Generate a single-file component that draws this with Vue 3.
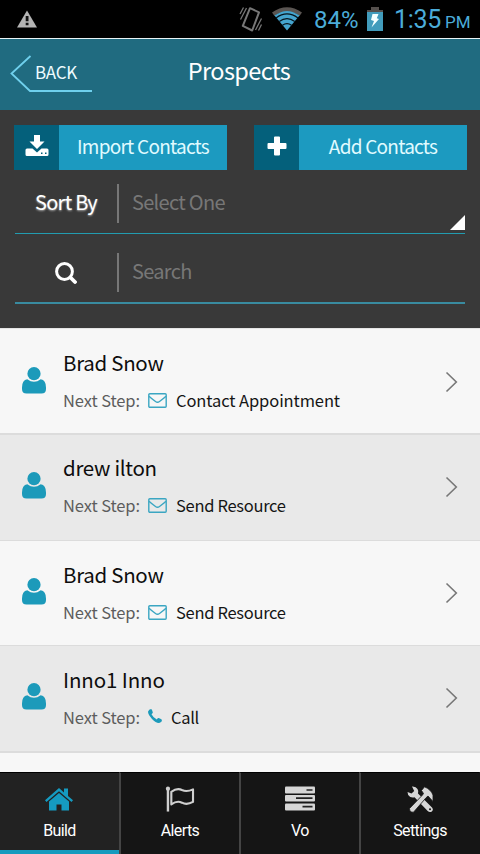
<template>
  <div class="screen">
    <div class="status-bar">
      <svg class="warning" width="20" height="18" viewBox="0 0 20 18">
        <path d="M10 0.5 L20 17.5 H0 Z" fill="#b4b4b4" />
        <path d="M8.7 6h2.8v5.3H8.7zM8.7 12.7h2.8v2.5H8.7z" fill="#111" />
      </svg>
      <div class="status-right">
        <svg class="vibrate" width="24" height="28" viewBox="0 0 24 28" fill="none" stroke="#777">
          <path d="M11 3.2 L20 7.300 L13.200 25.500 L3.800 20.800 Z" stroke-width="2" stroke-linejoin="round" />
          <path d="M1 9 L4.500 2.500 M1.500 14.500 L7.500 3 M16.500 25 L22.500 13.500 M19.500 25.500 L22.500 19.500" stroke-width="1.300" />
        </svg>
        <svg class="wifi" width="30" height="24" viewBox="0 0 30 24">
          <path d="M0 5.5 Q15 -5 30 5.5 L27.5 9 Q15 0 2.5 9 Z" fill="#5a5552" />
          <path d="M2.5 8.6 Q15 -.8 27.5 8.6 L15 23.5 Z" fill="#45a5cf" />
          <path d="M4 10.9 Q15 2.8 26 10.9 M7.2 14.5 Q15 8.8 22.8 14.5 M10.5 18.2 Q15 15 19.5 18.2" fill="none" stroke="#06141c" stroke-width="1.2" />
        </svg>
        <span class="percent">84%</span>
        <svg class="battery" width="16" height="24" viewBox="0 0 16 24">
          <path d="M4 0h8v3h4v5H0V3h4z" fill="#55504d" />
          <path d="M0 5h16v19H0z" fill="#429cbc" />
          <path d="M5.5 7h6L9.8 11.2 12 12 4.5 20.5 7 14 4 13z" fill="#f4ffff" />
        </svg>
        <span class="time">1:35</span>
        <span class="meridiem">PM</span>
      </div>
    </div>

    <header class="header">
      <button class="back">
        <svg width="84" height="38" viewBox="0 0 84 38" fill="none" stroke="#6fd0ed" stroke-width="1.8">
          <path d="M20.5 1 L1.5 18.5 L20 36 H82" />
        </svg>
        <span>BACK</span>
      </button>
      <h1>Prospects</h1>
    </header>

    <section class="filters">
      <div class="actions">
        <button class="action">
          <span class="action-icon">
            <svg class="download" width="24" height="22" viewBox="0 0 24 22" fill="#fff">
              <path d="M9 0h6v6.500h4.500L12 14 4.500 6.500H9z" />
              <path fill-rule="evenodd" d="M2 13.500H7.500L12 17.500l4.500-4H22Q23.500 13.500 23.500 15v4.500Q23.500 21 22 21H2Q.5 21 .5 19.500V15Q.5 13.500 2 13.500zM16 17.500v1.500h1.500v-1.500zM20 17.500v1.500h1.500v-1.500z" />
            </svg>
          </span>
          <span class="action-label">Import Contacts</span>
        </button>
        <button class="action">
          <span class="action-icon">
            <svg class="plus" width="20" height="20" viewBox="0 0 20 20" fill="#fff">
              <path d="M8 .5h4q1 0 1 1V7h5.500q1 0 1 1v4q0 1-1 1H13v5.500q0 1-1 1H8q-1 0-1-1V13H1.500q-1 0-1-1V8q0-1 1-1H7V1.500q0-1 1-1z" />
            </svg>
          </span>
          <span class="action-label">Add Contacts</span>
        </button>
      </div>

      <div class="field sort">
        <span class="field-label">Sort By</span>
        <span class="field-value">Select One</span>
        <i class="corner"></i>
      </div>
      <div class="field search">
        <span class="field-label">
          <svg width="22" height="22" viewBox="0 0 22 22" fill="none" stroke="#fff">
            <circle cx="9.500" cy="9.500" r="7.900" stroke-width="3" />
            <path d="M15.500 15.500 L20 20" stroke-width="3.800" stroke-linecap="round" />
          </svg>
        </span>
        <span class="field-value">Search</span>
      </div>
    </section>

    <main class="list">
      <article v-for="(item, index) in prospects" :key="index" class="row">
        <svg class="person" width="24" height="27" viewBox="0 0 24 27" fill="#1c9aba">
          <circle cx="12" cy="6.700" r="6.600" />
          <path d="M5.300 12.200Q12 17.500 18.700 12.200Q24 13 24 20.500V22Q24 26.500 19.500 26.500H4.500Q0 26.500 0 22V20.500Q0 13 5.300 12.200z" />
        </svg>
        <div class="info">
          <div class="name">{{ item.name }}</div>
          <div class="step">
            <span class="step-label">Next Step:</span>
            <svg v-if="item.icon === 'mail'" class="mail" width="19" height="15" viewBox="0 0 19 15" fill="none" stroke="#3ba6c2" stroke-width="1.400">
              <rect x=".8" y=".8" width="17.400" height="13.400" rx="1" />
              <path d="M1 3.300Q3 5.200 7.500 8.500Q9.500 10 11.500 8.500Q16 5.200 18 3.300" />
            </svg>
            <svg v-else class="phone" width="14" height="14" viewBox="0 0 14 14" fill="#1c9aba">
              <path d="M3.200 0Q4 .3 4.800 3.200Q5.100 4 3.500 5.200Q5.200 8.700 8.800 10.400Q10 8.800 10.700 9.100Q13.500 10.300 14 11Q14 13.200 11.800 13.800Q8.500 14.700 4 10Q-.5 5 .1 2.500Q.8 .2 3.200 0z" />
            </svg>
            <span class="step-value">{{ item.step }}</span>
          </div>
        </div>
        <svg class="chevron" width="13" height="22" viewBox="0 0 13 22" fill="none" stroke="#777" stroke-width="1.600">
          <path d="M1.500 1.500 L11.300 11 L1.500 20.500" />
        </svg>
      </article>
    </main>

    <nav class="tabs">
      <button v-for="tab in tabs" :key="tab" class="tab" :class="{ active: tab === activeTab }" @click="activeTab = tab">
        <svg v-if="tab === 'Build'" class="home" width="28" height="26" viewBox="0 0 28 26" fill="#159bc1">
          <path d="M14 1.500L19 6V2h4v7.500l5 4.300-1.500 1.700L14 4.700 1.500 15.500 0 13.800z" />
          <path d="M14 6.500L24 15v9h-7.500v-6h-5v6H4v-9z" />
        </svg>
        <svg v-else-if="tab === 'Alerts'" width="30" height="28" viewBox="0 0 30 28" fill="none" stroke="#cfcfcf">
          <circle cx="2.500" cy="2.800" r="2.200" fill="#cfcfcf" stroke="none" />
          <path d="M2.500 3V26.500" stroke-width="2.500" />
          <path d="M6 6Q12 1.700 17 4.200Q22 6.500 28.500 3.500V16.500Q22 20 17 17.300Q12 14.800 6 19z" stroke-width="2.200" stroke-linejoin="round" />
        </svg>
        <svg v-else-if="tab === 'Vo'" width="30" height="26" viewBox="0 0 30 26" fill="#d6d6d6">
          <rect y="0" width="30" height="7" rx="1" />
          <rect y="8.500" width="30" height="6.500" rx="1" />
          <rect y="17" width="30" height="7" rx="1" />
          <path d="M21.500 3.500h6M11 11.700h16.500M17.500 20.200h10" stroke="#222" stroke-width="1.700" />
        </svg>
        <svg v-else width="27" height="27" viewBox="0 0 27 27" fill="#d6d6d6">
          <path d="M5 .5Q9 .2 10.500 3Q11.800 5 11 7.500L25 21.500Q27 24 24.500 25.700Q22.500 26.800 20.700 25L7.500 11.300Q3.500 12.300 1.200 9L.5 6L4.500 7.500L7.200 5z" />
          <path d="M14.500 4.500L17.500 .8Q24 3.500 26 9V15.500L22.800 12L21 10L19 11.800L6.500 26.200Q2.500 26.500 2.500 22.500L15.500 9L16.500 7.500z" stroke="#151515" stroke-width=".8" />
          <circle cx="23" cy="23.300" r="1" fill="#151515" />
        </svg>
        <span>{{ tab }}</span>
      </button>
    </nav>
  </div>
</template>

<script setup>
import { ref } from 'vue'

const activeTab = ref('Build')
const tabs = ['Build', 'Alerts', 'Vo', 'Settings']

const prospects = [
  { name: 'Brad Snow', step: 'Contact Appointment', icon: 'mail' },
  { name: 'drew ilton', step: 'Send Resource', icon: 'mail' },
  { name: 'Brad Snow', step: 'Send Resource', icon: 'mail' },
  { name: 'Inno1 Inno', step: 'Call', icon: 'phone' },
]
</script>

<style>
body {
  margin: 0;
}
</style>

<style scoped>
.screen {
  display: flex;
  flex-direction: column;
  width: 480px;
  height: 854px;
  overflow: hidden;
  background: #f7f7f7;
  font-family: "Noto Sans CJK SC", "Open Sans", sans-serif;
}

svg {
  display: block;
  flex: none;
}

button {
  padding: 0;
  border: 0;
  font-family: inherit;
  background: none;
}

.status-bar {
  display: flex;
  justify-content: space-between;
  box-sizing: border-box;
  height: 39px;
  flex: none;
  padding: 0 10px 0 17px;
  background: #000;
  border-bottom: 1px solid #e9f4f6;
  color: #4bacd9;
  font-family: Roboto, sans-serif;
}

.warning {
  margin-top: 10px;
}

.status-right {
  display: flex;
  line-height: 38px;
}

.vibrate {
  margin: 5px 9px 0 0;
}

.wifi {
  margin: 7px 12px 0 0;
}

.percent {
  width: 47px;
  padding-top: 1px;
  font-size: 24px;
}

.battery {
  margin: 7px 11px 0 6px;
}

.time {
  width: 48px;
  padding-top: 1px;
  font-size: 25px;
  letter-spacing: -0.3px;
}

.meridiem {
  width: 25px;
  margin-left: 3px;
  padding-top: 3px;
  font-size: 17px;
}

.header {
  display: grid;
  grid-template-columns: 140px 200px 140px;
  flex: none;
  height: 71px;
  background: #206b80;
  color: #fff;
}

.back {
  display: grid;
  width: 84px;
  height: 38px;
  margin: 16px 0 0 10px;
  color: #eefcff;
  text-align: left;
}

.back svg,
.back span {
  grid-area: 1 / 1;
}

.back span {
  padding-left: 25px;
  font-size: 17px;
  line-height: 34px;
  letter-spacing: -0.3px;
}

.header h1 {
  margin: 0;
  padding: 12px 2px 0 0;
  font-size: 23.5px;
  font-weight: 400;
  line-height: 38px;
  letter-spacing: -0.6px;
  text-align: center;
}

.filters {
  box-sizing: border-box;
  flex: none;
  height: 218px;
  padding: 15px 15px 0;
  background: #393939;
}

.actions {
  display: flex;
  gap: 27px;
  margin: 0 -2px 0 -1px;
}

.action {
  display: flex;
  width: 213px;
  height: 45px;
  background: #1c9ac0;
  color: #e1fbff;
}

.action-icon {
  display: flex;
  align-items: center;
  justify-content: center;
  width: 45px;
  height: 45px;
  background: #04607b;
}

.download,
.plus {
  margin-bottom: 3px;
}

.action-label {
  flex: 1;
  font-size: 19px;
  line-height: 42px;
  letter-spacing: -0.75px;
  text-align: center;
}

.field {
  display: flex;
  position: relative;
  box-sizing: border-box;
}

.sort {
  height: 64px;
  padding-top: 14px;
  border-bottom: 1px solid #229cb0;
}

.search {
  height: 70px;
  padding-top: 19px;
  border-bottom: 2px solid #398ba0;
}

.field-label {
  box-sizing: border-box;
  display: flex;
  align-items: center;
  justify-content: center;
  width: 104px;
  height: 39px;
  border-right: 2px solid #777;
  color: #fff;
  font-size: 20px;
  line-height: 36px;
  letter-spacing: -0.75px;
  text-shadow: 0 1px 2px #aaa;
}

.sort .field-label {
  padding-bottom: 3px;
}

.field-value {
  padding-left: 13px;
  color: #777;
  font-size: 20px;
  line-height: 35px;
  letter-spacing: -0.7px;
}

.corner {
  position: absolute;
  right: 0;
  bottom: 3px;
  border-bottom: 15px solid #fff;
  border-left: 15px solid transparent;
}

.list {
  flex: 1;
  overflow: hidden;
  border-top: 1px solid #e4e4e4;
}

.row {
  display: flex;
  box-sizing: border-box;
  height: 106px;
  padding: 0 22px;
  border-bottom: 2px solid #dcdcdc;
  background: #f7f7f7;
}

.row:nth-child(even) {
  background: #e9e9e9;
}

.row:nth-child(2),
.row:nth-child(3) {
  border-bottom-width: 1px;
}

.row:nth-child(3) {
  height: 105px;
}

.row:nth-child(4) {
  height: 107px;
}

.person {
  margin: 38px 17px 0 0;
}

.row + .row .person {
  margin-top: 37px;
}

.info {
  flex: 1;
}

.name {
  padding-top: 17px;
  color: #0d0d0d;
  font-size: 20.5px;
  line-height: 32px;
  letter-spacing: -0.3px;
}

.row:nth-child(2) .name {
  padding-top: 16px;
}

.row:nth-child(4) .name {
  letter-spacing: -0.1px;
}

.step {
  display: flex;
  padding-top: 8px;
  font-size: 16.5px;
  line-height: 28px;
  letter-spacing: -0.1px;
  white-space: nowrap;
}

.step-label {
  width: 85px;
  color: #5d5d5d;
}

.mail {
  margin: 7px 9px 0 0;
}

.phone {
  margin: 6px 9px 0 0;
}

.step-value {
  color: #151515;
}

.row + .row .step-value {
  letter-spacing: -0.3px;
}

.chevron {
  margin-top: 42px;
}

.row + .row .chevron {
  margin-top: 41px;
}

.tabs {
  display: flex;
  flex: none;
  height: 82px;
  background: #151515;
}

.tab {
  display: flex;
  flex-direction: column;
  align-items: center;
  box-sizing: border-box;
  width: 120px;
  height: 82px;
  padding-top: 13px;
  border-top: 1px solid #000;
  color: #fff;
  font-family: Roboto, sans-serif;
  font-size: 16px;
  letter-spacing: -0.6px;
}

.tab:first-child {
  width: 119px;
}

.tab + .tab {
  border-left: 2px solid #444;
}

.tab svg {
  height: 27px;
}

.tab .home {
  margin-right: 2px;
}

.tab span {
  margin-top: 8px;
  line-height: 20px;
}

.tab.active {
  background: #222;
  border-bottom: 4px solid #169bbe;
}
</style>
